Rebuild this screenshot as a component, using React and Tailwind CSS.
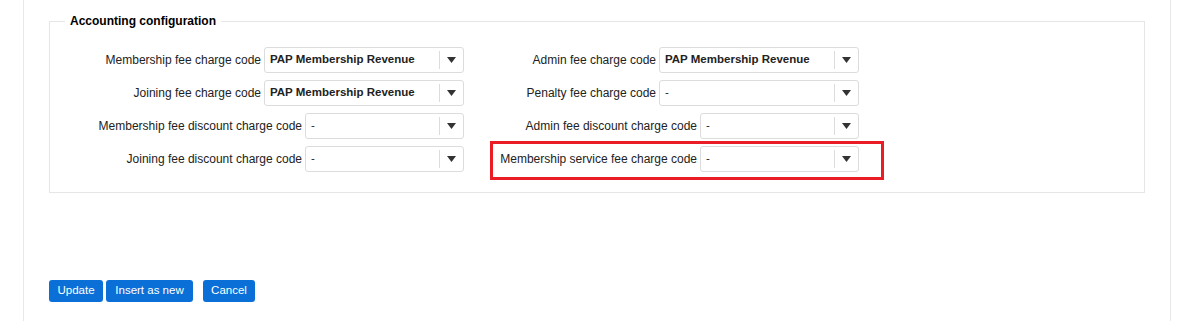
import React from "react";

const font = { fontFamily: '"Liberation Sans", Arial, sans-serif' };

const leftRows = [
  { label: "Membership fee charge code", value: "PAP Membership Revenue", wide: true },
  { label: "Joining fee charge code", value: "PAP Membership Revenue", wide: true },
  { label: "Membership fee discount charge code", value: "-" },
  { label: "Joining fee discount charge code", value: "-" },
];

const rightRows = [
  { label: "Admin fee charge code", value: "PAP Membership Revenue", wide: true },
  { label: "Penalty fee charge code", value: "-", wide: true },
  { label: "Admin fee discount charge code", value: "-" },
  { label: "Membership service fee charge code", value: "-", highlight: true },
];

function SelectBox({ value, wide }) {
  const bold = value !== "-";
  return (
    <div
      className={`flex h-[26px] items-center rounded-[3px] border border-[#dcdcdc] bg-white ${
        wide ? "w-[200px]" : "w-[159px]"
      }`}
    >
      <span
        className={`flex-1 truncate pl-[5px] text-[11.5px] text-[#222] ${bold ? "font-bold" : ""}`}
      >
        {value}
      </span>
      <span className="h-[18px] w-px bg-[#dcdcdc]" />
      <span className="flex w-[23px] items-center justify-center">
        <svg width="9" height="6" viewBox="0 0 9 6">
          <path d="M0 0 H9 L4.5 6 Z" fill="#333" />
        </svg>
      </span>
    </div>
  );
}

function Row({ row }) {
  return (
    <div className="flex h-[26px] justify-end">
      <div className="relative flex items-center gap-[3px]">
        <span className="text-[12px] text-[#222]">{row.label}</span>
        <SelectBox value={row.value} wide={row.wide} />
        {row.highlight && (
          <div className="pointer-events-none absolute -top-[5px] -bottom-[8px] -left-[10px] -right-[25px] border-[3px] border-[#ea1c26]" />
        )}
      </div>
    </div>
  );
}

function Button({ children, className = "" }) {
  return (
    <button
      className={`h-[22px] whitespace-nowrap rounded-[3px] bg-[#0a6fd7] px-0 text-[11.5px] text-white ${className}`}
    >
      {children}
    </button>
  );
}

export default function App() {
  return (
    <div className="min-h-[321px] bg-white" style={font}>
      <div className="ml-[23px] min-h-[321px] w-[1148px] border-x border-[#e8e8e8] px-[25px] pt-[13px]">
        <fieldset className="border border-[#e6e6e6] pb-[20px] pl-[15px]">
          <legend className="px-[5px] text-[12px] leading-[16px] font-bold text-black">
            Accounting configuration
          </legend>
          <div className="flex pt-[18px] pl-[4px]">
            <div className="flex w-[395px] flex-col gap-[7px]">
              {leftRows.map((r) => (
                <Row key={r.label} row={r} />
              ))}
            </div>
            <div className="flex w-[395px] flex-col gap-[7px]">
              {rightRows.map((r) => (
                <Row key={r.label} row={r} />
              ))}
            </div>
          </div>
        </fieldset>

        <div className="mt-[87px] flex items-center">
          <Button className="w-[54px]">Update</Button>
          <Button className="ml-[3px] w-[87px]">Insert as new</Button>
          <Button className="ml-[10px] w-[52px]">Cancel</Button>
        </div>
      </div>
    </div>
  );
}
